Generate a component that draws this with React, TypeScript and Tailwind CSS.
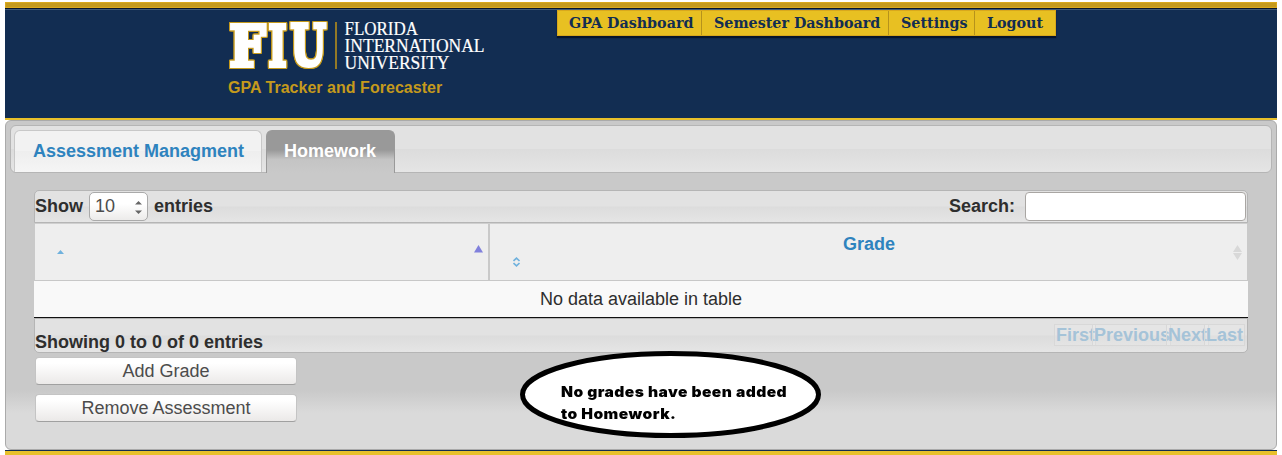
import React from 'react';

const BAR =
  'bg-[linear-gradient(#e2e2e2_0%,#e2e2e2_49%,#dcdcdc_51%,#e5e5e5_100%)] border-[#b5b5b5]';

const BUTTON =
  'block h-7 w-[262px] rounded-[4px] border border-[#c4c4c4] border-b-[#a0a0a0] bg-[linear-gradient(#ffffff_20%,#ebe9e8_100%)] text-[18px] leading-[24px] text-[#4c4c4c]';

function Nav() {
  return (
    <nav className="ml-[72px] flex h-[26px] border border-[#d9a81c] bg-[#e8c022] font-['DejaVu_Serif','Liberation_Serif',serif] text-[14.3px] leading-[24px] font-bold text-[#122d52] shadow-[0_2px_1px_#07152b]">
      <a className="w-[144px] border-r border-[#b6921c] pl-[11px] whitespace-nowrap">GPA Dashboard</a>
      <a className="w-[187px] border-r border-[#b6921c] pl-3 whitespace-nowrap">Semester Dashboard</a>
      <a className="w-[86px] border-r border-[#b6921c] pl-3 whitespace-nowrap">Settings</a>
      <a className="w-[80px] pl-3 whitespace-nowrap">Logout</a>
    </nav>
  );
}

function Logo() {
  return (
    <svg width="257" height="50" viewBox="228 21 257 50" className="block overflow-visible font-['DejaVu_Serif',serif]">
      <g fill="#fff" stroke="#fff" strokeWidth="4" fontWeight="700" fontSize="55.5" className="[filter:drop-shadow(1px_0_0_#c59a1c)_drop-shadow(-1px_0_0_#c59a1c)_drop-shadow(0_1px_0_#c59a1c)_drop-shadow(0_-1px_0_#c59a1c)]">
        <text x="229.5" y="66.5" textLength="36" lengthAdjust="spacingAndGlyphs">F</text>
        <text x="268.5" y="66.5" textLength="18" lengthAdjust="spacingAndGlyphs">I</text>
        <text x="290.5" y="66" textLength="35.5" lengthAdjust="spacingAndGlyphs">U</text>
      </g>
      <path d="M336 23V70" stroke="#b58d1c" strokeWidth="1.6" />
      <g fill="#fff" stroke="#fff" strokeWidth=".2" fontSize="18" className="font-['Liberation_Serif',serif]">
        <text x="344.5" y="35.5" textLength="73.5" lengthAdjust="spacingAndGlyphs">FLORIDA</text>
        <text x="344.5" y="52.5" textLength="140" lengthAdjust="spacingAndGlyphs">INTERNATIONAL</text>
        <text x="344.5" y="69.5" textLength="105" lengthAdjust="spacingAndGlyphs">UNIVERSITY</text>
      </g>
    </svg>
  );
}

function Header() {
  return (
    <header className="h-[118px] border-b-2 border-[#e8c02b] bg-[#122d52]">
      <div className="h-[6px] border border-[#dba91c] bg-[#c59a1c]" />
      <div className="h-[2px] border-b border-[#405a77] bg-[#07152b]" />
      <div className="flex items-start pl-[223px]">
        <div className="w-[257px] pt-[10px]">
          <Logo />
          <div className="mt-2 text-[16px] leading-[20px] font-bold tracking-[0.03px] whitespace-nowrap text-[#c59a1c]">GPA Tracker and Forecaster</div>
        </div>
        <Nav />
      </div>
    </header>
  );
}

function Tabs() {
  return (
    <div className={`flex h-12 rounded-[6px] border pt-1 pl-[3px] text-[18px] leading-[40px] font-bold ${BAR}`}>
      <div className="h-[42px] w-[248px] rounded-t-[6px] border border-b-0 border-[#c8c8c8] bg-[linear-gradient(#f2f2f2_48%,#eeeeee_50%,#f5f5f5)] pl-[18px] whitespace-nowrap text-[#2e83be]">
        Assessment Managment
      </div>
      <div className="ml-1 h-[43px] w-[129px] rounded-t-[6px] border border-b-0 border-[#999] bg-[linear-gradient(#999_45%,#c4c4c4_68%,#c9c9c9)] pl-[17px] text-white">
        Homework
      </div>
    </div>
  );
}

function Toolbar() {
  return (
    <div className={`flex h-[33px] items-center rounded-t-[5px] border text-[18px] font-bold ${BAR}`}>
      <span className="w-[54px]">Show</span>
      <div className="flex h-[29px] w-[59px] items-center justify-between rounded-[5px] border border-[#aaa] bg-[linear-gradient(#fff_40%,#ecebea)] pr-[5px] pl-[5px] font-normal text-[#4c4c4c]">
        <span>10</span>
        <svg width="7" height="15" viewBox="0 0 7 15" fill="#666" className="mt-[2px]">
          <path d="M0 4.5L3.5 1L7 4.5ZM0 10.5L3.5 14L7 10.5Z" />
        </svg>
      </div>
      <span className="ml-[6px]">entries</span>
      <span className="mr-[10px] ml-auto">Search:</span>
      <input className="mr-px h-[29px] w-[221px] rounded-[4px] border border-[#a9a6a3] bg-white" />
    </div>
  );
}

function TableHead() {
  return (
    <div className="mx-px flex h-[58px] border-t border-b border-t-[#cfcfcf] border-b-[#c8c8c8] bg-[#eee]">
      <div className="flex w-[455px] shrink-0 items-start justify-between border-r-2 border-[#c9c9c9] pr-[5px] pl-[22px]">
        <svg width="7" height="4" viewBox="0 0 7 4" fill="#6fb1dd" className="mt-[26px]"><path d="M0 4L3.5 0L7 4Z" /></svg>
        <svg width="9" height="8" viewBox="0 0 9 8" fill="#8080dc" className="mt-[21px]"><path d="M0 7.5L4.5 0L9 7.5Z" /></svg>
      </div>
      <div className="flex grow items-start pr-[5px] pl-[23px]">
        <svg width="8" height="10" viewBox="0 0 8 10" fill="none" stroke="#6fb1dd" strokeWidth="1.7" className="mt-[33px]"><path d="M.5 4L3.5 1.2L6.5 4M.5 6L3.5 8.8L6.5 6" /></svg>
        <div className="grow pt-[10px] pr-4 text-center text-[18px] leading-[20px] font-bold text-[#2e83be]">Grade</div>
        <svg width="9" height="15" viewBox="0 0 9 15" fill="#d8d8d8" className="mt-[21px]"><path d="M0 7L4.5 0L9 7ZM0 8L4.5 15L9 8Z" /></svg>
      </div>
    </div>
  );
}

function Footer() {
  const page = 'h-[22px] border border-[#d8d8d8] bg-white/10 pl-px whitespace-nowrap text-[#a5c3d8]';
  return (
    <div className={`flex h-[35px] items-start justify-between rounded-b-[5px] border pr-[2px] text-[18px] leading-[20px] font-bold ${BAR}`}>
      <span className="mt-[13px]">Showing 0 to 0 of 0 entries</span>
      <div className="mt-[5px] flex">
        <a className={`w-[42px] ${page}`}>First</a>
        <a className={`-ml-[4px] w-[79px] ${page}`}>Previous</a>
        <a className={`-ml-[5px] w-[43px] ${page}`}>Next</a>
        <a className={`-ml-[5px] w-[41px] ${page}`}>Last</a>
      </div>
    </div>
  );
}

function Callout() {
  return (
    <div className="absolute top-[230px] left-[514px] h-[87px] w-[301px]">
      <svg width="301" height="87" viewBox="0 0 301 87" className="block">
        <ellipse cx="150.5" cy="43.5" rx="148" ry="41" fill="#fff" stroke="#000" strokeWidth="5" />
      </svg>
      <p className="absolute top-[30px] left-[41px] origin-left scale-x-[1.075] font-['Inter',sans-serif] text-[14.5px] leading-[22px] font-black tracking-[0.42px] whitespace-nowrap text-black">
        No grades have been added<br />to Homework.
      </p>
    </div>
  );
}

export default function App() {
  return (
    <div className="h-[455px] w-[1282px] overflow-hidden bg-white pt-[2px] pr-[5px] pl-[5px] font-['Liberation_Sans',Arial,sans-serif] text-[#2e2e2e]">
      <Header />
      <main className="relative h-[330px] rounded-[6px] border border-[#aaa] bg-[linear-gradient(#c9c9c9_0%,#c9c9c9_82%,#dadada_89%,#dadada_100%)] p-1">
        <Tabs />
        <section className="mt-[17px] px-6">
          <Toolbar />
          <TableHead />
          <div className="h-[37px] border-b border-[#111] bg-[#f9f9f9] text-center text-[18px] leading-[36px]">No data available in table</div>
          <Footer />
          <div className="mt-[4px] ml-px flex flex-col gap-[9px]">
            <button className={BUTTON}>Add Grade</button>
            <button className={BUTTON}>Remove Assessment</button>
          </div>
        </section>
        <Callout />
      </main>
      <div className="h-[5px] border-t border-[#122d52] bg-[#e8c02b]" />
    </div>
  );
}
